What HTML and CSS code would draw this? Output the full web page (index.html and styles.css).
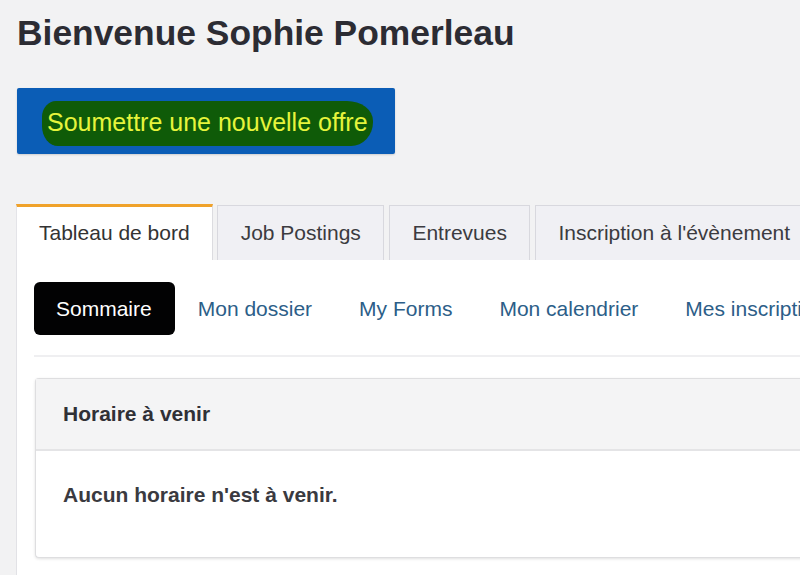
FILE: index.html
```html
<!DOCTYPE html>
<html lang="fr">
<head>
<meta charset="utf-8">
<title>Tableau de bord</title>
<link rel="stylesheet" href="styles.css">
</head>
<body>
<div class="page">
  <h1 class="title">Bienvenue Sophie Pomerleau</h1>
  <a class="submit-btn" href="#"><span class="marker">Soumettre une nouvelle offre</span></a>

  <nav class="tabs">
    <a class="tab active" href="#">Tableau de bord</a>
    <a class="tab" href="#">Job Postings</a>
    <a class="tab" href="#">Entrevues</a>
    <a class="tab" href="#">Inscription à l'évènement</a>
  </nav>

  <section class="panel">
    <div class="subnav">
      <a class="pill selected" href="#">Sommaire</a>
      <a class="pill" href="#">Mon dossier</a>
      <a class="pill" href="#">My Forms</a>
      <a class="pill" href="#">Mon calendrier</a>
      <a class="pill" href="#">Mes inscriptions</a>
    </div>
    <div class="divider"></div>
    <div class="card">
      <div class="card-head">Horaire à venir</div>
      <div class="card-body">Aucun horaire n'est à venir.</div>
    </div>
  </section>
</div>
</body>
</html>
```

FILE: styles.css
```css
html, body {
  margin: 0;
  padding: 0;
  background: #f2f2f3;
  overflow: hidden;
  height: 575px;
}

body {
  font-family: "Liberation Sans", Arial, sans-serif;
  color: #333;
}

.page {
  padding-left: 16px;
  width: 900px;
}

.title {
  margin: 13px 0 0 1px;
  font-size: 35.4px;
  line-height: 40px;
  font-weight: bold;
  color: #2c2c33;
  white-space: nowrap;
}

.submit-btn {
  display: flex;
  align-items: center;
  box-sizing: border-box;
  width: 378px;
  height: 66px;
  margin: 35px 0 0 1px;
  padding-left: 25px;
  background: #0b5db6;
  border-radius: 2px;
  text-decoration: none;
  box-shadow: 0 1px 2px rgba(0, 0, 0, 0.15);
}

.marker {
  display: inline-block;
  font-size: 25px;
  line-height: 30px;
  color: #e6f43c;
  background: #0f5b08;
  padding: 6px 5px 9px 5px;
  margin-top: 4px;
  border-radius: 14px 26px 22px 16px / 16px 20px 24px 20px;
  white-space: nowrap;
}

.tabs {
  display: flex;
  align-items: flex-end;
  gap: 4.5px;
  margin-top: 50px;
  height: 56px;
  white-space: nowrap;
}

.tab {
  box-sizing: border-box;
  height: 55px;
  display: flex;
  align-items: center;
  padding: 0 22.5px;
  font-size: 21px;
  color: #3b3b40;
  text-decoration: none;
  background: #f0f0f4;
  border: 1px solid #d8d8de;
  border-bottom: none;
  flex-shrink: 0;
}

.tab.active {
  height: 56px;
  padding: 0 22px 1px 22px;
  background: #fff;
  color: #333;
  border-top: 3px solid #f0a22a;
  border-left: 1px solid #e4e4e8;
  border-right: 1px solid #dcdce0;
}

.panel {
  background: #fff;
  border-left: 1px solid #e2e2e6;
  padding: 22px 0 40px 17px;
  min-height: 300px;
}

.subnav {
  display: flex;
  align-items: center;
  height: 53px;
  white-space: nowrap;
}

.pill {
  display: flex;
  align-items: center;
  height: 53px;
  padding: 0 24px 0 23px;
  font-size: 21px;
  color: #2c5e88;
  text-decoration: none;
  border-radius: 6px;
  flex-shrink: 0;
}

.pill.selected {
  padding: 0 23px 0 22px;
  background: #020203;
  color: #fff;
}

.divider {
  height: 2px;
  background: #efeff1;
  margin-top: 20px;
}

.card {
  margin: 21px 0 0 1px;
  border: 1px solid #dedee0;
  border-right: none;
  border-radius: 4px 0 0 4px;
  box-shadow: 0 1px 3px rgba(0, 0, 0, 0.12);
  background: #fff;
}

.card-head {
  height: 70px;
  display: flex;
  align-items: center;
  padding-left: 27px;
  background: #f4f4f5;
  border-bottom: 2px solid #e4e4e6;
  font-size: 21px;
  font-weight: bold;
  color: #303036;
}

.card-body {
  padding: 32px 27px 50px 27px;
  font-size: 21px;
  line-height: 24px;
  font-weight: bold;
  color: #3a3a40;
}
```
